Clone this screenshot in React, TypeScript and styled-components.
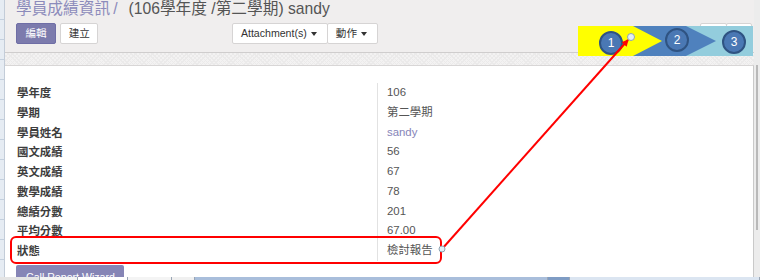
import React from "react";
import styled, { createGlobalStyle } from "styled-components";

const Global = createGlobalStyle`
  html, body { margin: 0; padding: 0; background: #f0eeee; }
  * { box-sizing: border-box; }
`;

const Page = styled.div`
  position: relative;
  width: 760px;
  height: 280px;
  overflow: hidden;
  display: flex;
  flex-direction: column;
  background: #f0eeee;
  font-family: "Liberation Sans", "Noto Sans CJK TC", sans-serif;
  color: #4c4c4c;
`;

const Body = styled.div`
  display: flex;
  height: 277px;
`;

const Gutter = styled.div`
  width: 5px;
  border-right: 1px solid #c3ccd8;
  background: repeating-linear-gradient(to bottom, #e6ecf3 0 19px, #c4d0de 19px 20px);
`;

const Main = styled.div`
  width: 749px;
  display: flex;
  flex-direction: column;
`;

const ScrollTrack = styled.div`
  width: 6px;
  background: #ececec;
  padding-top: 65px;
  display: flex;
  justify-content: center;
`;

const Thumb = styled.div`
  width: 2px;
  height: 165px;
  background: #b9b9b9;
`;

const ControlPanel = styled.div`
  height: 53px;
  padding: 0 2px 0 11px;
  border-bottom: 1px solid #cfcdcd;
  display: flex;
  flex-direction: column;
`;

const Breadcrumb = styled.div`
  height: 17px;
  font-size: 15.7px;
  line-height: 17px;
  white-space: nowrap;
  color: #555;
`;

const Crumb = styled.span`
  color: #8c8bbb;
`;

const Sep = styled.span`
  color: #8c8bbb;
  margin: 0 11px 0 3px;
`;

const ButtonRow = styled.div`
  margin-top: 6px;
  display: flex;
  align-items: flex-start;
`;

const LeftPart = styled.div`
  width: 362px;
  display: flex;
  justify-content: space-between;
`;

const Group = styled.div<{ $gap?: number }>`
  display: flex;
  gap: ${(p) => p.$gap ?? 0}px;
`;

const Btn = styled.button<{ $primary?: boolean; $pad?: string }>`
  height: 21px;
  margin: 0;
  padding: ${(p) => p.$pad ?? "0 8.5px"};
  font-family: "Liberation Sans", "Noto Sans CJK TC", sans-serif;
  font-size: 10.6px;
  line-height: 19px;
  border-radius: 2px;
  border: 1px solid ${(p) => (p.$primary ? "#6f6ea6" : "#d6d4d4")};
  background: ${(p) => (p.$primary ? "#7c7bad" : "#ffffff")};
  color: ${(p) => (p.$primary ? "#ffffff" : "#333333")};
  display: flex;
  align-items: center;
  white-space: nowrap;
  & + & {
    margin-left: -1px;
  }
`;

const Caret = styled.span`
  display: inline-block;
  width: 0;
  height: 0;
  margin-left: 4px;
  border-top: 4px solid #333;
  border-left: 3px solid transparent;
  border-right: 3px solid transparent;
`;

const Pager = styled.div`
  margin-left: auto;
  display: flex;
`;

const PagerBtn = styled.div`
  width: 27px;
  height: 30px;
  background: #fff;
  border: 1px solid #d6d4d4;
  border-radius: 2px;
  & + & {
    margin-left: -1px;
    width: 26px;
  }
`;

const SheetBg = styled.div`
  flex: 1;
  padding-top: 12px;
  display: flex;
  flex-direction: column;
  background-color: #f3f2f2;
  background-image: repeating-linear-gradient(45deg, #ebeaea 0 1px, transparent 1px 3px),
    repeating-linear-gradient(-45deg, #ebeaea 0 1px, transparent 1px 3px);
`;

const Sheet = styled.div`
  flex: 1;
  background: #fff;
  border-top: 1px solid #d8d6d6;
  border-right: 1px solid #c9c9c9;
  padding: 17px 0 0 12px;
  overflow: hidden;
`;

const FormTable = styled.div`
  display: grid;
  grid-template-columns: 361px 1fr;
  grid-auto-rows: 19.75px;
`;

const Label = styled.div`
  font-family: "Noto Sans CJK TC", sans-serif;
  font-weight: 700;
  font-size: 11.4px;
  line-height: 19.75px;
  color: #3d3d3d;
  border-right: 1px solid #e2e2e2;
`;

const Value = styled.div<{ $link?: boolean }>`
  font-size: 11.4px;
  line-height: 19.75px;
  padding-left: 9px;
  color: ${(p) => (p.$link ? "#8584b8" : "#555")};
`;

const WizardBtn = styled.button`
  margin: 4px 0 0 -1px;
  height: 24px;
  width: 108px;
  padding: 1px 0 0 10px;
  text-align: left;
  border: none;
  border-radius: 2px;
  background: #8685b6;
  color: #fff;
  font-family: "Liberation Sans", sans-serif;
  font-size: 10.6px;
  line-height: 16px;
  display: block;
`;

const Taskbar = styled.div`
  height: 3px;
  display: flex;
`;

const TaskSeg = styled.div<{ $w: number; $c: string }>`
  width: ${(p) => p.$w}px;
  background: ${(p) => p.$c};
  border-right: 1px solid #9aa6b5;
`;

const Overlay = styled.svg`
  position: absolute;
  left: 0;
  top: 0;
  pointer-events: none;
`;

const rows: { label: string; value: string; link?: boolean }[] = [
  { label: "學年度", value: "106" },
  { label: "學期", value: "第二學期" },
  { label: "學員姓名", value: "sandy", link: true },
  { label: "國文成績", value: "56" },
  { label: "英文成績", value: "67" },
  { label: "數學成績", value: "78" },
  { label: "總績分數", value: "201" },
  { label: "平均分數", value: "67.00" },
  { label: "狀態", value: "檢討報告" },
];

const steps = [
  { n: "1", x: 611, y: 43 },
  { n: "2", x: 677, y: 40 },
  { n: "3", x: 734, y: 42 },
];

export default function App() {
  return (
    <Page>
      <Global />
      <Body>
        <Gutter />
        <Main>
          <ControlPanel>
            <Breadcrumb>
              <Crumb>學員成績資訊</Crumb>
              <Sep>/</Sep>
              (106學年度 /第二學期) sandy
            </Breadcrumb>
            <ButtonRow>
              <LeftPart>
                <Group $gap={5}>
                  <Btn $primary>編輯</Btn>
                  <Btn $pad="0 7.5px">建立</Btn>
                </Group>
                <Group>
                  <Btn $pad="0 10px 0 8px">
                    Attachment(s)
                    <Caret />
                  </Btn>
                  <Btn $pad="0 10px 0 8px">
                    動作
                    <Caret />
                  </Btn>
                </Group>
              </LeftPart>
              <Pager>
                <PagerBtn />
                <PagerBtn />
              </Pager>
            </ButtonRow>
          </ControlPanel>
          <SheetBg>
            <Sheet>
              <FormTable>
                {rows.map((r) => (
                  <React.Fragment key={r.label}>
                    <Label>{r.label}</Label>
                    <Value $link={r.link}>{r.value}</Value>
                  </React.Fragment>
                ))}
              </FormTable>
              <WizardBtn>Call Report Wizard</WizardBtn>
            </Sheet>
          </SheetBg>
        </Main>
        <ScrollTrack>
          <Thumb />
        </ScrollTrack>
      </Body>
      <Taskbar>
        <TaskSeg $w={40} $c="#e4e4e4" />
        <TaskSeg $w={38} $c="#f4f4f4" />
        <TaskSeg $w={50} $c="#ffffff" />
        <TaskSeg $w={44} $c="#f4f4f4" />
        <TaskSeg $w={23} $c="#f0f0f0" />
        <TaskSeg $w={353} $c="#a9bedb" />
        <TaskSeg $w={22} $c="#7f9cc4" />
        <TaskSeg $w={190} $c="#dbe5f1" />
      </Taskbar>

      <Overlay width={760} height={280} viewBox="0 0 760 280">
        <defs>
          <marker id="ah" markerWidth="3.5" markerHeight="3.5" refX="3" refY="1.75" orient="auto" markerUnits="strokeWidth">
            <path d="M0,0 L3.5,1.75 L0,3.5 Z" fill="#ff0000" />
          </marker>
        </defs>
        <rect x={578} y={26} width={175} height={30} fill="#93cddd" />
        <polygon points="633,26 686,26 716,41 686,56 633,56" fill="#4f81bd" />
        <polygon points="578,26 633,26 662,41 633,56 578,56" fill="#ffff00" />
        {steps.map((s) => (
          <g key={s.n}>
            <circle cx={s.x} cy={s.y} r={11} fill="#4a78b4" stroke="#2f5382" strokeWidth={2} />
            <text
              x={s.x}
              y={s.y + 4}
              textAnchor="middle"
              fontFamily="Liberation Sans, sans-serif"
              fontSize={12}
              fill="#ffffff"
            >
              {s.n}
            </text>
          </g>
        ))}
        <rect x={11} y={237} width={430} height={26} rx={5} fill="none" stroke="#ff0000" strokeWidth={2} />
        <line x1={442} y1={249} x2={628} y2={40} stroke="#ff0000" strokeWidth={2} markerEnd="url(#ah)" />
        <circle cx={442} cy={249} r={3} fill="#e3eef5" stroke="#8ea3b2" strokeWidth={1} />
        <circle cx={631} cy={37} r={3.5} fill="#e3eef5" stroke="#8ea3b2" strokeWidth={1} />
      </Overlay>
    </Page>
  );
}
